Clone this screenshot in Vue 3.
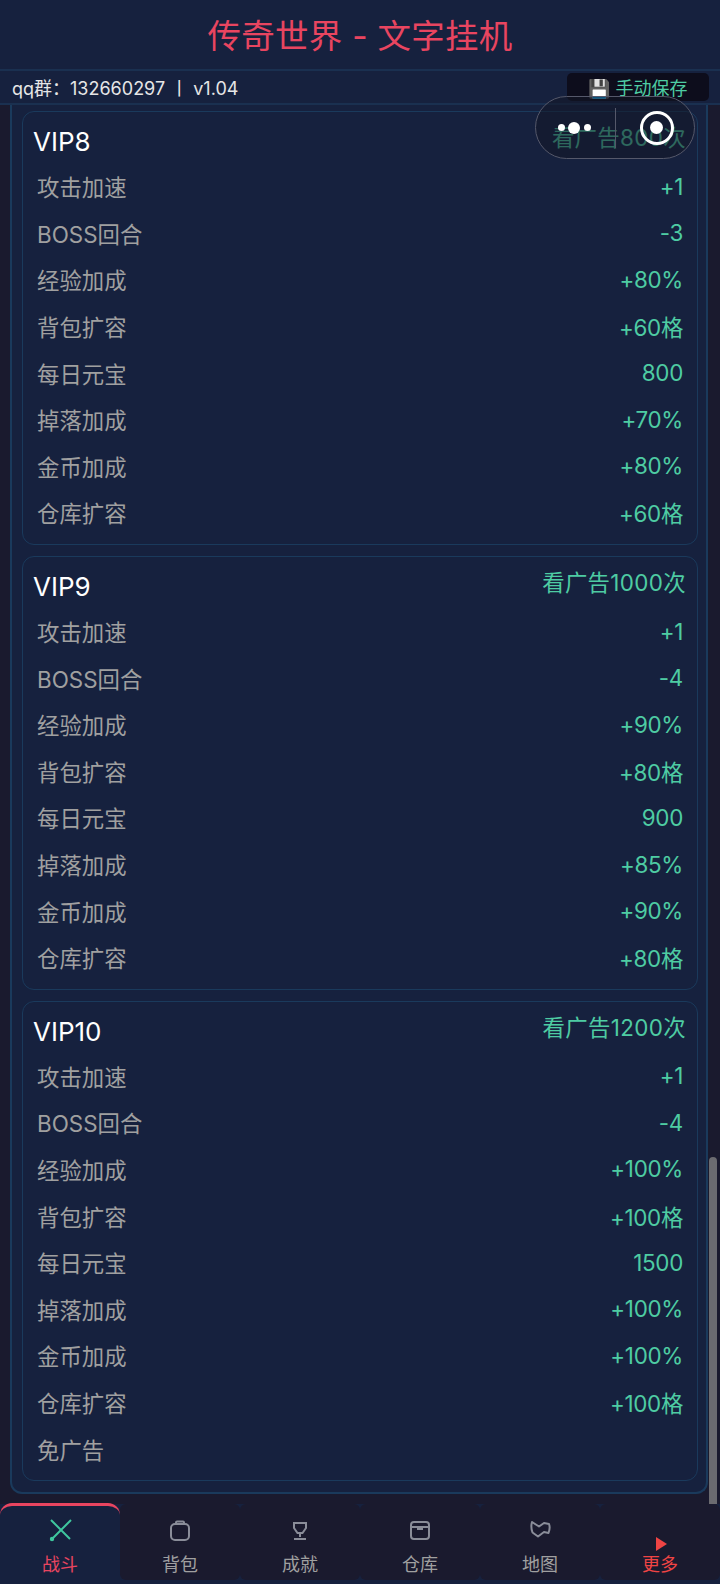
<template>
<div class="page">
  <div class="header">
    <h1 class="title">传奇世界 - 文字挂机</h1>
  </div>
  <div class="notice">
    <span class="notice-text">qq群：132660297 丨 v1.04</span>
    <button class="save-btn"><span class="disk">💾</span> 手动保存</button>
  </div>
  <div class="main">
    <div class="panel">
      <div class="card" v-for="vip in vipList" :key="vip.name">
        <div class="card-head">
          <span class="vip-name">{{ vip.name }}</span>
          <span class="vip-cond">{{ vip.cond }}</span>
        </div>
        <div class="row" v-for="row in vip.rows" :key="row[0]">
          <span class="row-label">{{ row[0] }}</span>
          <span class="row-value">{{ row[1] }}</span>
        </div>
      </div>
    </div>
    <div class="scrollbar"></div>
  </div>
  <div class="tabbar">
    <div class="tab" :class="{ active: tab.active, more: tab.more }" v-for="tab in tabs" :key="tab.name">
      <svg class="tab-icon" :viewBox="tab.more ? '0 0 28 15' : '0 0 28 28'" v-html="tab.icon"></svg>
      <span class="tab-name">{{ tab.name }}</span>
    </div>
  </div>
  <div class="capsule">
    <div class="dots"><i></i><i class="big"></i><i></i></div>
    <div class="capsule-line"></div>
    <div class="target"><i></i></div>
  </div>
</div>
</template>

<script setup>
const labels = ['攻击加速', 'BOSS回合', '经验加成', '背包扩容', '每日元宝', '掉落加成', '金币加成', '仓库扩容']

function makeRows(values) {
  return labels.map((label, i) => [label, values[i]])
}

const vipList = [
  { name: 'VIP8', cond: '看广告800次', rows: makeRows(['+1', '-3', '+80%', '+60格', '800', '+70%', '+80%', '+60格']) },
  { name: 'VIP9', cond: '看广告1000次', rows: makeRows(['+1', '-4', '+90%', '+80格', '900', '+85%', '+90%', '+80格']) },
  { name: 'VIP10', cond: '看广告1200次', rows: [...makeRows(['+1', '-4', '+100%', '+100格', '1500', '+100%', '+100%', '+100格']), ['免广告', '']] }
]

const grey = 'fill="none" stroke="#8a8d99" stroke-width="2"'
const tabs = [
  { name: '战斗', active: true, icon: '<path d="M6.500 24.500 L25 6 M5 6 L24 25" fill="none" stroke="#3fc79f" stroke-width="2"/><circle cx="6" cy="25" r="2.200" fill="#3fc79f"/>' },
  { name: '背包', icon: `<rect x="5" y="10" width="18" height="16" rx="4" ${grey}/><path d="M10 10 V8.500 Q10 7.500 11 7.500 H17 Q18 7.500 18 8.500 V10" ${grey}/>` },
  { name: '成就', icon: `<path d="M8 9 H20 V14 L16.500 19 H11.500 L8 14 Z" ${grey}/><path d="M14 19 V23" ${grey}/><path d="M8 25 H20" ${grey} stroke-width="2.500"/>` },
  { name: '仓库', icon: `<rect x="5" y="8" width="18" height="17" rx="3" ${grey}/><path d="M5 13 H23" ${grey}/><rect x="11" y="13" width="6" height="3" fill="#8a8d99"/>` },
  { name: '地图', icon: `<path d="M6 8 L13 12.500 L18 9 L23 10 Q24.500 14 22.500 19 L18 18 L12 22.500 L6.500 18.500 Q4.500 13 6 8 Z" ${grey} stroke-linejoin="round"/>` },
  { name: '更多', more: true, icon: '<path d="M10 0 L21 7 L10 14 Z" fill="#ef4444"/>' }
]
</script>

<style>
html, body {
  margin: 0;
  background: #1a1a2e;
}
</style>

<style scoped>
.page {
  position: relative;
  width: 720px;
  height: 1584px;
  overflow: hidden;
  background: #1a1a2e;
  font-family: Inter, "Noto Sans CJK SC", sans-serif;
  display: flex;
  flex-direction: column;
}

.header {
  height: 66px;
  padding-bottom: 3px;
  flex: none;
  background: #16213e;
  border-bottom: 2px solid #1a3050;
  display: flex;
  align-items: center;
  justify-content: center;
}

.title {
  margin: 0;
  font-size: 33.500px;
  font-weight: 400;
  color: #e94560;
  letter-spacing: 0.25px;
}

.notice {
  height: 32px;
  flex: none;
  background: #16213e;
  border-bottom: 2px solid #1a3050;
  display: flex;
  align-items: center;
  justify-content: space-between;
  padding: 0 12px;
  color: #e6e6e6;
}

.notice-text {
  font-size: 18px;
}

.save-btn {
  width: 142px;
  height: 28px;
  margin-top: -1px;
  margin-right: -1px;
  padding: 0;
  border: none;
  border-radius: 5px;
  background: #0d0d1c;
  color: #4ecca3;
  font-family: inherit;
  font-size: 18px;
}

.disk {
  color: #e6e6e6;
}

.main {
  position: relative;
  flex: 1;
  min-height: 0;
  overflow: hidden;
  padding-right: 12px;
  padding-left: 10px;
}

.panel {
  height: 1389px;
  box-sizing: border-box;
  padding: 6px 8px 0 10px;
  background: #16213e;
  border: 2px solid #1a3a5c;
  border-top: none;
  border-radius: 0 0 12px 12px;
}

.card {
  box-sizing: border-box;
  margin-bottom: 11px;
  padding: 0 11px 8px 10px;
  border: 1px solid #1a3a5c;
  border-radius: 12px;
  background: #16213e;
}

.card-head {
  height: 51px;
  display: flex;
  justify-content: space-between;
  align-items: flex-start;
  color: #fff;
}

.vip-name {
  margin-top: 12px;
  font-size: 26px;
  line-height: 36px;
}

.vip-cond {
  margin-top: 10px;
  font-size: 22.400px;
  line-height: 32px;
  color: #4ecca3;
  letter-spacing: 0.35px;
}

.row {
  height: 46.600px;
  display: flex;
  justify-content: space-between;
  align-items: center;
  padding: 0 3px 0 4px;
  font-size: 22.400px;
}

.row-label {
  color: #a0a0a0;
}

.row-value {
  color: #4ecca3;
  letter-spacing: -0.3px;
}

.scrollbar {
  position: absolute;
  right: 3px;
  bottom: 0;
  width: 8px;
  height: 347px;
  border-radius: 4px 4px 0 0;
  background: #6b6b70;
}

.tabbar {
  height: 80px;
  flex: none;
  display: flex;
  background: #16213e;
}

.tab {
  flex: 1;
  height: 76px;
  background: #1a1a2e;
  border-radius: 6px;
  display: flex;
  flex-direction: column;
  align-items: center;
  color: #a0a0a0;
}

.tab.active {
  background: #16213e;
  border-top: 3px solid #e94560;
  border-radius: 12px 12px 0 0;
  margin-top: -1px;
  color: #e94560;
}

.tab.more {
  color: #ef4444;
}

.tab-icon {
  width: 28px;
  height: 28px;
  margin-top: 10px;
  flex: none;
}

.tab.active .tab-icon {
  margin-top: 8px;
}

.tab.more .tab-icon {
  margin-top: 33px;
  margin-bottom: -10px;
  height: 15px;
}

.tab-name {
  font-size: 18px;
  margin-top: 8px;
}

.capsule {
  position: absolute;
  left: 535px;
  top: 96px;
  width: 160px;
  height: 63px;
  box-sizing: border-box;
  border: 1.500px solid #55586a;
  border-radius: 32px;
  background: rgba(20, 24, 38, 0.55);
  display: flex;
  align-items: center;
}

.dots {
  width: 76px;
  margin-right: 3px;
  display: flex;
  align-items: center;
  justify-content: center;
  gap: 3.500px;
}

.dots i {
  width: 7px;
  height: 7px;
  border-radius: 50%;
  background: #fff;
}

.dots i.big {
  width: 12px;
  height: 12px;
}

.capsule-line {
  width: 1px;
  height: 40px;
  background: #55586a;
}

.target {
  flex: 1;
  padding-left: 3px;
  display: flex;
  align-items: center;
  justify-content: center;
}

.target i {
  width: 34px;
  height: 34px;
  box-sizing: border-box;
  border: 3.500px solid #fff;
  border-radius: 50%;
  position: relative;
}

.target i::after {
  content: "";
  position: absolute;
  inset: 7.500px;
  border-radius: 50%;
  background: #fff;
}
</style>
